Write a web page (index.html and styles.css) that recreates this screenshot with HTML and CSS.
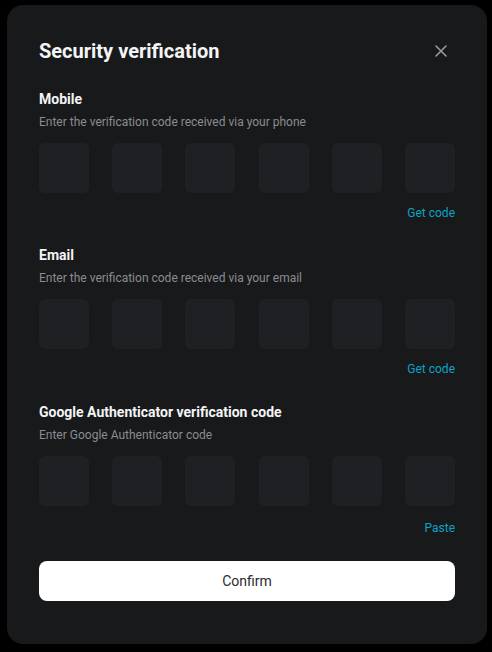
FILE: index.html
```html
<!DOCTYPE html>
<html lang="en">
<head>
    <meta charset="UTF-8">
    <meta name="viewport" content="width=device-width, initial-scale=1.0">
    <title>Security verification</title>
    <link rel="stylesheet" href="styles.css">
</head>
<body>
    <div class="modal">
        <div class="modal-header">
            <h2>Security verification</h2>
            <button type="button" class="close-btn" aria-label="Close">
                <svg width="14" height="14" viewBox="0 0 14 14">
                    <path d="M2 2L12 12M12 2L2 12" stroke="#9a9b9f" stroke-width="1.6" stroke-linecap="round"/>
                </svg>
            </button>
        </div>

        <div class="verify-group">
            <div class="group-title">Mobile</div>
            <div class="group-hint">Enter the verification code received via your phone</div>
            <div class="code-inputs">
                <input type="text" maxlength="1">
                <input type="text" maxlength="1">
                <input type="text" maxlength="1">
                <input type="text" maxlength="1">
                <input type="text" maxlength="1">
                <input type="text" maxlength="1">
            </div>
            <div class="group-action"><a href="#">Get code</a></div>
        </div>

        <div class="verify-group">
            <div class="group-title">Email</div>
            <div class="group-hint">Enter the verification code received via your email</div>
            <div class="code-inputs">
                <input type="text" maxlength="1">
                <input type="text" maxlength="1">
                <input type="text" maxlength="1">
                <input type="text" maxlength="1">
                <input type="text" maxlength="1">
                <input type="text" maxlength="1">
            </div>
            <div class="group-action"><a href="#">Get code</a></div>
        </div>

        <div class="verify-group verify-group-last">
            <div class="group-title">Google Authenticator verification code</div>
            <div class="group-hint">Enter Google Authenticator code</div>
            <div class="code-inputs">
                <input type="text" maxlength="1">
                <input type="text" maxlength="1">
                <input type="text" maxlength="1">
                <input type="text" maxlength="1">
                <input type="text" maxlength="1">
                <input type="text" maxlength="1">
            </div>
            <div class="group-action"><a href="#">Paste</a></div>
        </div>

        <button type="button" class="confirm-btn">Confirm</button>
    </div>
</body>
</html>
```

FILE: styles.css
```css
body {
    margin: 0;
    background-color: #000000;
    font-family: Roboto, "Liberation Sans", Arial, sans-serif;
    color: #ffffff;
}

.modal {
    box-sizing: border-box;
    width: 480px;
    height: 639px;
    margin: 5px 0 0 7px;
    padding: 32px 32px 0 32px;
    background-color: #18191b;
    border-radius: 16px;
}

.modal-header {
    display: flex;
    justify-content: space-between;
    align-items: center;
    height: 28px;
    margin-bottom: 24px;
}

.modal-header h2 {
    margin: 0;
    font-size: 20px;
    line-height: 28px;
    font-weight: 700;
    color: #f4f4f5;
}

.close-btn {
    display: flex;
    align-items: center;
    justify-content: center;
    width: 24px;
    height: 24px;
    margin-right: 2px;
    padding: 0;
    border: none;
    background: none;
    cursor: pointer;
}

.verify-group {
    margin-bottom: 23px;
}

.verify-group + .verify-group {
    margin-bottom: 24px;
}

.group-title {
    font-size: 14px;
    line-height: 20px;
    font-weight: 700;
    color: #f4f4f5;
}

.group-hint {
    margin-top: 4px;
    font-size: 12px;
    line-height: 18px;
    color: #8b8c90;
}

.code-inputs {
    display: flex;
    justify-content: space-between;
    margin-top: 12px;
}

.code-inputs input {
    box-sizing: border-box;
    width: 50px;
    height: 50px;
    padding: 0;
    border: none;
    border-radius: 6px;
    background-color: #1f2024;
    color: #ffffff;
    font-size: 20px;
    text-align: center;
    outline: none;
}

.group-action {
    margin-top: 11px;
    text-align: right;
    font-size: 12px;
    line-height: 18px;
}

.group-action a {
    color: #0ba3c4;
    text-decoration: none;
}

.verify-group-last .group-action {
    margin-top: 13px;
}

.confirm-btn {
    display: block;
    width: 100%;
    height: 40px;
    margin-top: 0;
    border: none;
    border-radius: 8px;
    background-color: #ffffff;
    color: #2b2b2b;
    font-family: inherit;
    font-size: 14px;
    cursor: pointer;
}
```
